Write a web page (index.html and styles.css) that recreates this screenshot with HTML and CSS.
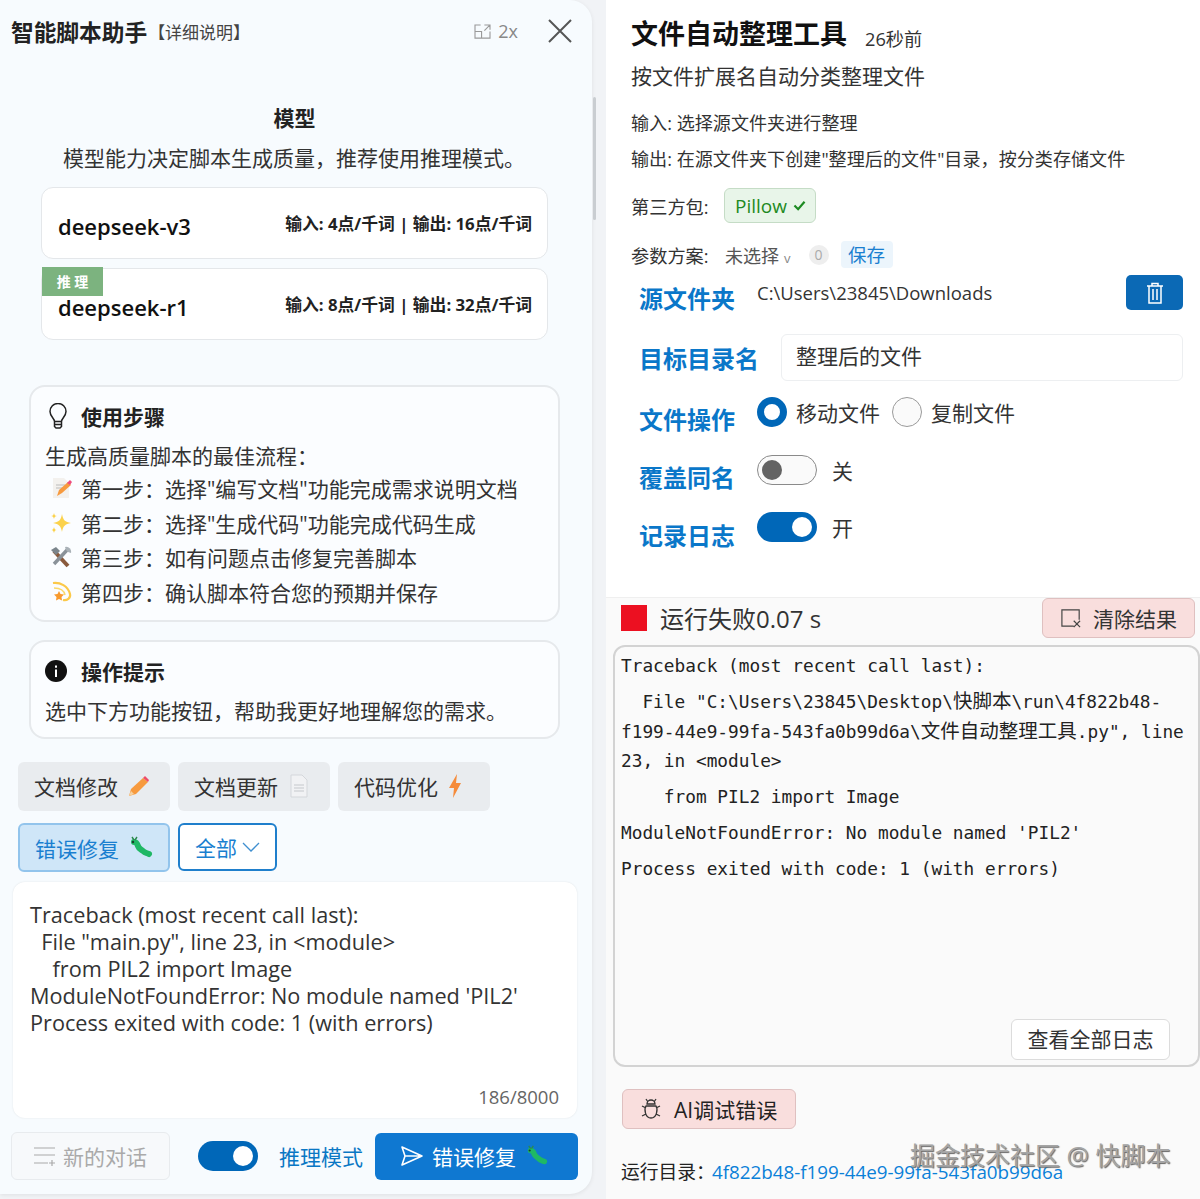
FILE: index.html
```html
<!DOCTYPE html>
<html lang="zh-CN">
<head>
<meta charset="utf-8">
<title>智能脚本助手</title>
<link rel="stylesheet" href="styles.css">
</head>
<body>
<svg class="defs" width="0" height="0" aria-hidden="true">
  <defs>
    <symbol id="caterpillar" viewBox="0 0 24 24">
      <path d="M5 6c2 0 3 1 4 4s3 3 5 5 4 2 6 3" fill="none" stroke="#1fb865" stroke-width="6" stroke-linecap="round"/>
      <path d="M3 1l2 3M8 1L6 4" stroke="#2b8a4d" stroke-width="1.4"/>
      <circle cx="4" cy="6" r="1.2" fill="#17412a"/>
    </symbol>
  </defs>
</svg>
<div class="app">
  <aside class="assistant">
    <header class="head">
      <div class="head-title"><strong>智能脚本助手</strong><span>【详细说明】</span></div>
      <div class="head-tools">
        <svg class="expand" viewBox="0 0 18 16" width="17" height="15"><path d="M7 1H1v14h16V8M1 8h7v7M11 1h6v5M17 1l-6 6" fill="none" stroke="#9a9a9a" stroke-width="1.2"/></svg>
        <span class="zoom">2x</span>
        <svg class="close" viewBox="0 0 26 26" width="26" height="26"><path d="M2 2l22 22M24 2L2 24" stroke="#555" stroke-width="2"/></svg>
      </div>
    </header>
    <h2 class="model-title">模型</h2>
    <p class="model-desc">模型能力决定脚本生成质量，推荐使用推理模式。</p>
    <div class="model-list">
      <div class="model-card"><b>deepseek-v3</b><span>输入: 4点/千词 | 输出: 16点/千词</span></div>
      <div class="model-card"><i class="badge">推 理</i><b>deepseek-r1</b><span>输入: 8点/千词 | 输出: 32点/千词</span></div>
    </div>
    <section class="info steps">
      <h3><svg viewBox="0 0 20 26" width="20" height="26"><path d="M6.5 18.5c0-3-4.500-5-4.500-10a8 8 0 0 1 16 0c0 5-4.500 7-4.500 10zM6.500 18.500v5l1.500 1.500h4l1.500-1.500v-5M6.500 21.500h7" fill="none" stroke="#222" stroke-width="1.5"/></svg>使用步骤</h3>
      <p>生成高质量脚本的最佳流程：</p>
      <ul>
        <li><svg viewBox="0 0 22 22" width="22" height="22"><path d="M3 1h11l5 5v15H3z" fill="#f3f1ee"/><path d="M6 8h9M6 11h7" stroke="#bbb"/><path d="M7 19l2-6 9-8 3 3-9 8z" fill="#f79a3e"/><path d="M17 6l3-3 2 2-2 3z" fill="#ee4d7e"/></svg>第一步：选择"编写文档"功能完成需求说明文档</li>
        <li><svg viewBox="0 0 22 22" width="22" height="22"><path d="M12 2c1 6 3 8 9 9-6 1-8 3-9 9-1-6-3-8-9-9 6-1 8-3 9-9z" fill="#fbd24c"/><path d="M4 1c.4 2 1 3 3 3-2 .4-2.600 1-3 3-.4-2-1-2.600-3-3 2 0 2.600-1 3-3zM4 15c.4 2 1 2.600 2.500 3-1.500.4-2.100 1-2.500 3-.4-2-1-2.600-2.500-3 1.500-.4 2.100-1 2.500-3z" fill="#fbd24c"/></svg>第二步：选择"生成代码"功能完成代码生成</li>
        <li><svg viewBox="0 0 22 22" width="22" height="22"><path d="M4 5l14 15" stroke="#8a5a3c" stroke-width="4"/><path d="M18 3L4 18" stroke="#8a9299" stroke-width="3.500"/><path d="M1 4l5-3 4 4-4 4z" fill="#7b858c"/><path d="M15 1a5 5 0 0 1 6 6l-3-1-2-2z" fill="#a9b1b7"/></svg>第三步：如有问题点击修复完善脚本</li>
        <li><svg viewBox="0 0 22 22" width="22" height="22"><path d="M3 2c7-1 15 3 17 11 1 4-3 7-7 6" fill="none" stroke="#fbc94a" stroke-width="2.200"/><path d="M4 7c5 0 10 2 11 7" fill="none" stroke="#fbd96b" stroke-width="1.500"/><path d="M9 10l1.500 3 3.500.5-2.500 2.500.5 3.500-3-1.600-3 1.600.5-3.500L4 13.500 7.500 13z" fill="#f89a2e"/></svg>第四步：确认脚本符合您的预期并保存</li>
      </ul>
    </section>
    <section class="info tips">
      <h3><svg viewBox="0 0 22 22" width="22" height="22"><circle cx="11" cy="11" r="11" fill="#111"/><rect x="10" y="9.500" width="2" height="7.500" fill="#fff"/><rect x="10" y="5.500" width="2" height="2.200" fill="#fff"/></svg>操作提示</h3>
      <p>选中下方功能按钮，帮助我更好地理解您的需求。</p>
    </section>
    <div class="chips">
      <button class="chip">文档修改<svg viewBox="0 0 22 22" width="22" height="22"><path d="M1 21l2-7L15 3l5 4L8 19z" fill="#f79a3e"/><path d="M15 3l2-2 4 4-1 2z" fill="#ee4d6a"/><path d="M1 21l2-5 3 3z" fill="#f6d2a0"/></svg></button>
      <button class="chip">文档更新<svg viewBox="0 0 22 24" width="22" height="24"><path d="M3 1h11l5 5v17H3z" fill="#f1f2f4" stroke="#d4d7db"/><path d="M6 11h10M6 14h10M6 17h10" stroke="#c5c8cc"/></svg></button>
      <button class="chip">代码优化<svg viewBox="0 0 14 24" width="14" height="24"><path d="M9 0L1 14h5l-1 10 8-15H8z" fill="#f58b3a"/></svg></button>
      <button class="chip chip-active">错误修复<svg class="bug-icon" width="24" height="24"><use href="#caterpillar"/></svg></button>
      <button class="chip chip-outline">全部<svg viewBox="0 0 18 10" width="18" height="10"><path d="M1 1l8 8 8-8" fill="none" stroke="#3f8fd0" stroke-width="1.300"/></svg></button>
    </div>
    <div class="prompt">
      <pre>Traceback (most recent call last):
  File "main.py", line 23, in &lt;module&gt;
    from PIL2 import Image
ModuleNotFoundError: No module named 'PIL2'
Process exited with code: 1 (with errors)</pre>
      <span class="count">186/8000</span>
    </div>
    <footer class="composer">
      <button class="new-chat"><svg viewBox="0 0 24 20" width="24" height="20"><path d="M1 2h21M1 9h21M1 17h14M19 14v6M16 17h6" stroke="#aaa" stroke-width="1.200" fill="none"/></svg>新的对话</button>
      <span class="toggle on mode-toggle"></span>
      <span class="mode-label">推理模式</span>
      <button class="send"><svg viewBox="0 0 24 22" width="24" height="22"><path d="M2 2l20 9-20 9 3-9zM5 11h17" fill="none" stroke="#fff" stroke-width="1.600" stroke-linejoin="round"/></svg>错误修复<svg class="send-bug" width="22" height="22"><use href="#caterpillar"/></svg></button>
    </footer>
  </aside>
  <div class="scroll-thumb"></div>
  <main class="tool">
    <div class="tool-top">
      <div class="tool-title"><h1>文件自动整理工具</h1><span>26秒前</span></div>
      <p class="tool-sub">按文件扩展名自动分类整理文件</p>
      <p class="tool-io io-in">输入: 选择源文件夹进行整理</p>
      <p class="tool-io io-out">输出: 在源文件夹下创建"整理后的文件"目录，按分类存储文件</p>
      <div class="pkg"><span class="meta-label">第三方包:</span><span class="pkg-chip">Pillow<svg viewBox="0 0 14 12" width="13" height="11"><path d="M1.500 6l4 4 7-8" fill="none" stroke="#1d8a22" stroke-width="2.400"/></svg></span></div>
      <div class="params"><span class="meta-label">参数方案:</span><span class="scheme">未选择<em>v</em></span><span class="zero">0</span><span class="save">保存</span></div>
      <div class="form">
        <div class="row row-src"><label>源文件夹</label><span class="path">C:\Users\23845\Downloads</span>
          <button class="trash"><svg viewBox="0 0 18 22" width="18" height="22"><path d="M1 4h16M6 4V1.500h6V4M3 4v17h12V4M7 7v11M11 7v11" fill="none" stroke="#fff" stroke-width="1.500"/></svg></button></div>
        <div class="row row-dest"><label>目标目录名</label><span class="input">整理后的文件</span></div>
        <div class="row row-op"><label>文件操作</label><span class="radios"><i class="radio on"></i><span>移动文件</span><i class="radio"></i><span>复制文件</span></span></div>
        <div class="row row-over"><label>覆盖同名</label><span class="switch"><span class="toggle off"></span><span>关</span></span></div>
        <div class="row row-log"><label>记录日志</label><span class="switch"><span class="toggle on"></span><span>开</span></span></div>
      </div>
    </div>
    <div class="result">
      <div class="result-head">
        <i class="stop"></i><span class="status">运行失败0.07 s</span>
        <button class="clear"><svg viewBox="0 0 24 22" width="22" height="20"><path d="M15 20H2V2h19v11M15 14l7 7M22 14l-7 7" fill="none" stroke="#444" stroke-width="1.300"/></svg>清除结果</button>
      </div>
      <div class="log">
        <p>Traceback (most recent call last):</p>
        <p>  File "C:\Users\23845\Desktop\<span class="cjk">快脚本</span>\run\4f822b48-<br>f199-44e9-99fa-543fa0b99d6a\<span class="cjk">文件自动整理工具</span>.py", line<br>23, in &lt;module&gt;</p>
        <p>    from PIL2 import Image</p>
        <p>ModuleNotFoundError: No module named 'PIL2'</p>
        <p>Process exited with code: 1 (with errors)</p>
        <button class="all-log">查看全部日志</button>
      </div>
      <button class="debug"><svg viewBox="0 0 20 22" width="20" height="22"><path d="M6 6a4 4 0 0 1 8 0zM5 8h10c2 3 1 12-5 12S3 11 5 8zM5 1l2 3M15 1l-2 3M1 8l4 2M19 8l-4 2M1 18l4-2M19 18l-4-2" fill="none" stroke="#333" stroke-width="1.300"/></svg>AI调试错误</button>
      <p class="run-dir">运行目录：<a>4f822b48-f199-44e9-99fa-543fa0b99d6a</a></p>
    </div>
  </main>
  <div class="watermark">掘金技术社区 @ 快脚本</div>
</div>
</body>
</html>
```

FILE: styles.css
```css
* { box-sizing: border-box; }
html, body { margin: 0; padding: 0; }
body {
  width: 1200px;
  height: 1199px;
  overflow: hidden;
  background: #f1f3f6;
  color: #222;
  font-family: "Open Sans", "Noto Sans CJK SC", sans-serif;
  font-size: 21px;
}
.defs { position: absolute; }
button { font: inherit; color: inherit; cursor: pointer; }
h1, h2, h3, p, ul, pre { margin: 0; padding: 0; }
.app { position: relative; display: flex; width: 1200px; height: 1199px; }

.assistant {
  width: 592px;
  height: 1194px;
  flex: none;
  background: #f7fbfe;
  border-radius: 0 22px 22px 0;
  box-shadow: 0 1px 4px rgba(0, 0, 0, .08);
}
.head { display: flex; align-items: center; justify-content: space-between; height: 64px; padding: 0 19px 2px 11px; }
.head-title { display: flex; align-items: center; }
.head-title strong { font-size: 22.700px; color: #222; }
.head-title span { font-size: 17px; color: #444; margin-left: 1px; }
.head-tools { display: flex; align-items: center; }
.zoom { color: #888; font-size: 18px; margin: 0 29px 0 7px; }
.model-title { margin-top: 39px; padding-right: 3px; font-size: 21px; line-height: 30px; text-align: center; color: #222; }
.model-desc { margin-top: 10px; padding-right: 4px; line-height: 30px; text-align: center; color: #333; font-size: 21px; }
.model-list { display: flex; flex-direction: column; gap: 9px; width: 507px; margin: 14px 0 0 41px; }
.model-card {
  position: relative;
  display: flex;
  align-items: center;
  justify-content: space-between;
  height: 72px;
  padding: 4px 15px 0 16px;
  background: #fff;
  border: 1px solid #e4e7ea;
  border-radius: 12px;
}
.model-card b { font-size: 22px; font-weight: 600; color: #111; margin-top: 1px; }
.model-card span { font-size: 16.800px; font-weight: 700; color: #222; margin-top: -4px; }
.badge {
  position: absolute;
  left: 0;
  top: -2px;
  width: 61px;
  height: 29px;
  background: #7cb37f;
  color: #fff;
  font-style: normal;
  font-weight: 700;
  font-size: 14px;
  line-height: 29px;
  text-align: center;
}

.info {
  width: 531px;
  margin-left: 29px;
  padding: 0 14px;
  background: #fbfdff;
  border: 2px solid #e6e9ec;
  border-radius: 16px;
  color: #333;
}
.info h3 { display: flex; align-items: center; gap: 14px; height: 30px; font-size: 21px; color: #222; }
.info p { line-height: 30px; font-size: 21px; white-space: nowrap; }
.steps { margin-top: 45px; height: 237px; padding-top: 14px; }
.steps h3 svg { margin-left: 3px; }
.steps h3 { gap: 13px; }
.steps p { margin-top: 10px; }
.steps ul { list-style: none; }
.steps li { display: flex; align-items: center; height: 34.500px; font-size: 21px; white-space: nowrap; }
.steps li svg { margin: 0 9px 0 5px; flex: none; }
.tips { margin-top: 18px; height: 99px; padding-top: 14px; }
.tips p { margin-top: 10px; }

.chips { display: flex; flex-wrap: wrap; gap: 12px 8px; width: 520px; margin: 23px 0 0 18px; }
.chip {
  display: flex;
  align-items: center;
  gap: 10px;
  width: 152px;
  height: 49px;
  padding: 0 16px 2px;
  background: #e9ecef;
  border: 0;
  border-radius: 6px;
  color: #333;
  font-size: 21px;
  white-space: nowrap;
}
.chip-active { background: #cfe6f8; border: 2px solid #92c4ec; color: #1a7fd0; padding: 0 15px; }
.chip-outline { width: 99px; background: #fff; border: 2px solid #1f7fcc; color: #1a7fd0; padding: 0 15px; gap: 5px; height: 48px; }
.prompt {
  position: relative;
  width: 564px;
  height: 236px;
  margin: 10px 0 0 13px;
  padding: 19px 17px;
  background: #fff;
  border-radius: 12px;
  box-shadow: 0 0 2px rgba(0, 0, 0, .1);
}
.prompt pre { font-family: "Open Sans", sans-serif; font-size: 21.700px; line-height: 27px; color: #333; white-space: pre; }
.count { position: absolute; right: 18px; bottom: 9px; font-size: 18.500px; color: #666; }
.composer { position: relative; display: flex; align-items: center; height: 48px; margin: 14px 0 0 11px; }
.new-chat {
  display: flex;
  align-items: center;
  gap: 6px;
  width: 159px;
  height: 48px;
  padding: 0 0 0 21px;
  background: #f7f9fb;
  border: 1px solid #e8ebee;
  border-radius: 6px;
  color: #aaa;
  font-size: 21px;
}
.mode-toggle { margin-left: 28px; }
.mode-label { margin-left: 21px; color: #0a77c4; font-size: 21px; }
.send {
  display: flex;
  align-items: center;
  gap: 8px;
  width: 203px;
  height: 47px;
  margin-left: 12px;
  padding: 0 0 0 25px;
  background: #0f78d1;
  border: 0;
  border-radius: 6px;
  color: #fff;
  font-size: 21px;
}
.send-bug { margin-left: 2px; }

.toggle { position: relative; display: inline-block; width: 60px; height: 30px; border-radius: 15px; flex: none; }
.toggle::after { content: ""; position: absolute; top: 5px; width: 20px; height: 20px; border-radius: 50%; }
.toggle.on { background: #0067b8; }
.toggle.on::after { right: 5px; background: #fff; }
.toggle.off { background: #fafafa; border: 1.500px solid #8a8a8a; }
.toggle.off::after { left: 3.500px; top: 3.500px; background: #636363; width: 20px; height: 20px; }

.scroll-thumb { position: absolute; left: 593px; top: 97px; width: 3px; height: 123px; background: #c9cdd1; border-radius: 2px; }

.tool { width: 594px; margin-left: 14px; height: 1199px; background: #fff; position: relative; }
.tool-top { height: 597px; padding: 0 17px 0 25px; }
.tool-title { display: flex; align-items: flex-end; gap: 18px; padding-top: 14px; height: 58px; padding-bottom: 4px; }
.tool-title h1 { font-size: 27px; line-height: 40px; color: #111; }
.tool-title span { font-size: 18.200px; line-height: 30px; color: #333; }
.tool-sub { margin-top: 3px; font-size: 21px; line-height: 30px; color: #333; }
.tool-io { font-size: 18.100px; line-height: 28px; color: #333; white-space: nowrap; }
.io-in { margin-top: 18px; }
.io-out { margin-top: 8px; }
.pkg { display: flex; align-items: center; gap: 17px; margin-top: 15px; height: 35px; }
.meta-label { font-size: 18.200px; width: 76px; color: #333; white-space: nowrap; flex: none; }
.pkg-chip { display: flex; align-items: center; gap: 6px; width: 92px; height: 35px; padding-left: 10px; background: #e8f5e9; border: 1px solid #c5dcc6; border-radius: 6px; color: #1d8a22; font-size: 19px; }
.params { display: flex; align-items: center; margin-top: 18px; height: 27px; }
.scheme { margin-left: 18px; font-size: 18px; color: #555; }
.scheme em { font-style: normal; font-size: 13px; color: #888; margin-left: 5px; }
.zero { width: 20px; height: 20px; margin-left: 18px; border-radius: 50%; background: #eeeeee; color: #aaa; font-size: 14px; line-height: 20px; text-align: center; }
.save { width: 52px; height: 27px; margin-left: 12px; background: #ecf5fc; border-radius: 4px; color: #1a7fd0; font-size: 18.500px; line-height: 27px; text-align: center; }

.form { position: relative; }
.row { position: relative; display: flex; }
.row label { width: 126px; padding-left: 8px; font-size: 24px; font-weight: 700; color: #0a77c9; white-space: nowrap; flex: none; }
.row-src { height: 59px; margin-top: 7px; align-items: flex-start; }
.row-src label { padding-top: 7px; line-height: 34px; }
.path { margin-top: 3px; font-size: 18.500px; line-height: 30px; color: #333; white-space: nowrap; }
.trash { position: absolute; right: 0; top: 0; display: flex; align-items: center; justify-content: center; width: 57px; height: 35px; background: #0b69b5; border: 0; border-radius: 5px; }
.row-dest { height: 47px; align-items: center; }
.row-dest label { width: 150px; }
.input { display: block; width: 402px; height: 47px; padding-left: 14px; background: #fff; border: 1px solid #edeff1; border-radius: 6px; line-height: 42px; color: #333; font-size: 21px; }
.row-op { height: 56px; margin-top: 16px; }
.row-op label { padding-top: 6px; line-height: 34px; }
.radios { display: flex; align-items: center; height: 30px; }
.radios span { font-size: 21px; color: #333; margin: 0 12px 0 9px; }
.radio { width: 30px; height: 30px; border-radius: 50%; background: #fafafa; border: 1.500px solid #9a9a9a; flex: none; }
.radio.on { background: #fff; border: 7px solid #0067b8; }
.row-over { height: 57px; margin-top: 2px; }
.row-over label { padding-top: 6px; line-height: 34px; }
.row-log label { padding-top: 7px; line-height: 34px; }
.switch { display: flex; align-items: center; gap: 15px; height: 30px; font-size: 21px; color: #333; }
.row-log { height: 58px; }

.result { height: 602px; background: #fafafa; border-top: 1px solid #efefef; position: relative; }
.result-head { position: relative; display: flex; align-items: flex-start; height: 47px; padding: 6px 0 0 15px; }
.stop { width: 26px; height: 26px; background: #ec1021; margin-top: 1px; }
.status { margin-left: 13px; font-size: 24px; line-height: 30px; color: #333; }
.clear { position: absolute; right: 5px; top: 0; display: flex; align-items: center; gap: 11px; width: 153px; height: 40px; padding: 0 0 0 17px; background: #f9dedd; border: 1px solid #dfc0c0; border-radius: 6px; color: #333; font-size: 21px; white-space: nowrap; }
.log {
  position: relative;
  width: 587px;
  height: 422px;
  margin-left: 7px;
  padding: 4px 6px;
  background: #fafafa;
  border: 2px solid #d3d3d3;
  border-radius: 12px;
  font-family: "DejaVu Sans Mono", "Noto Sans CJK SC", monospace;
  font-size: 17.800px;
  line-height: 29.500px;
  color: #222;
}
.log p { margin-bottom: 6.500px; white-space: pre; }
.cjk { font-size: 19.500px; }
.all-log { position: absolute; right: 28px; bottom: 5px; width: 159px; height: 41px; background: #fff; border: 1px solid #dcdcdc; border-radius: 6px; color: #333; font-family: "Open Sans", "Noto Sans CJK SC", sans-serif; font-size: 21px; }
.debug { display: flex; align-items: center; gap: 13px; width: 174px; height: 40px; margin: 22px 0 0 16px; padding: 0 0 0 18px; background: #f9dedd; border: 1px solid #dfc0c0; border-radius: 6px; color: #222; font-size: 21px; white-space: nowrap; }
.run-dir { margin: 28px 0 0 15px; font-size: 18.800px; line-height: 30px; color: #222; }
.run-dir a { color: #0a80d8; margin-left: -3px; }
.watermark {
  position: absolute;
  left: 910px;
  top: 1138px;
  font-size: 25px;
  line-height: 34px;
  color: #a5a5a5;
  text-shadow: 1px 1px 1px #666;
  white-space: nowrap;
}
```
